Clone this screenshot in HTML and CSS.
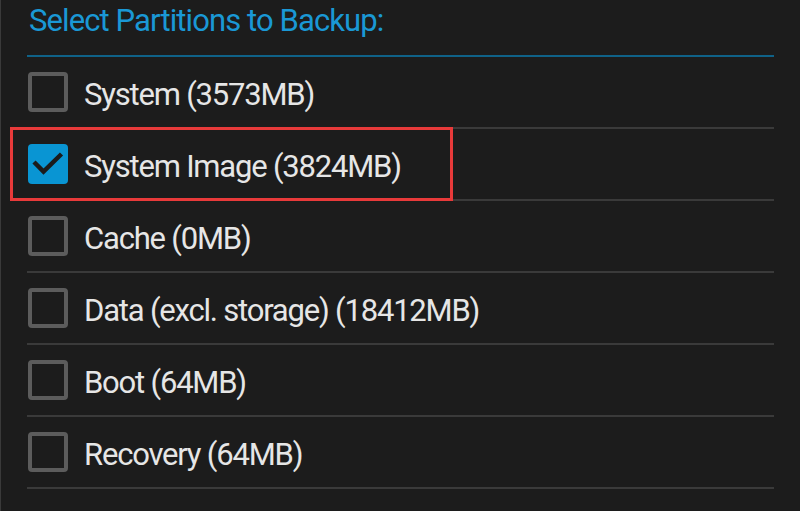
FILE: index.html
```html
<!DOCTYPE html>
<html lang="en">
<head>
    <meta charset="UTF-8">
    <meta name="viewport" content="width=device-width, initial-scale=1.0">
    <title>Backup</title>
    <link rel="stylesheet" href="styles.css">
</head>
<body>
    <div id="backup-panel">
        <div class="panel-title">Select Partitions to Backup:</div>
        <div class="partition-list">
            <div class="partition-row">
                <span class="checkbox"></span>
                <span class="partition-name">System (3573MB)</span>
            </div>
            <div class="partition-row">
                <span class="checkbox checked">
                    <svg viewBox="0 0 40 40" width="40" height="40"><polyline points="6,18 15.5,27.5 33.5,10" fill="none" stroke="#1b1b1b" stroke-width="4.5"/></svg>
                </span>
                <span class="partition-name">System Image (3824MB)</span>
                <span class="highlight"></span>
            </div>
            <div class="partition-row">
                <span class="checkbox"></span>
                <span class="partition-name">Cache (0MB)</span>
            </div>
            <div class="partition-row">
                <span class="checkbox"></span>
                <span class="partition-name">Data (excl. storage) (18412MB)</span>
            </div>
            <div class="partition-row">
                <span class="checkbox"></span>
                <span class="partition-name">Boot (64MB)</span>
            </div>
            <div class="partition-row">
                <span class="checkbox"></span>
                <span class="partition-name">Recovery (64MB)</span>
            </div>
        </div>
    </div>
</body>
</html>
```

FILE: styles.css
```css
body {
    margin: 0;
    padding: 0;
    background-color: #1c1c1c;
    font-family: Roboto, "Liberation Sans", sans-serif;
    height: 511px;
    overflow: hidden;
}
#backup-panel {
    border-left: 1px solid #3a3a3a;
    height: 100%;
    padding-left: 26px;
    width: 747px;
}
.panel-title {
    height: 52px;
    padding-top: 3px;
    padding-left: 2px;
    line-height: 36px;
    font-size: 31px;
    letter-spacing: -0.9px;
    color: #1a98d5;
    border-bottom: 2px solid #0f6288;
}
.partition-row {
    position: relative;
    display: flex;
    align-items: center;
    height: 70px;
    border-bottom: 2px solid #3a3a3a;
}
.checkbox {
    box-sizing: border-box;
    width: 40px;
    height: 40px;
    margin-left: 1px;
    border: 4px solid #5c5c5c;
    border-radius: 4px;
    flex-shrink: 0;
}
.checkbox.checked {
    border: none;
    background-color: #0995d3;
}
.checkbox svg {
    display: block;
}
.partition-name {
    margin-left: 16px;
    padding-top: 4px;
    font-size: 31px;
    letter-spacing: -1.2px;
    color: #e6e6e6;
}
.highlight {
    position: absolute;
    left: -17px;
    top: -2px;
    width: 437px;
    height: 68px;
    border: 3px solid #e83a3a;
}
```
